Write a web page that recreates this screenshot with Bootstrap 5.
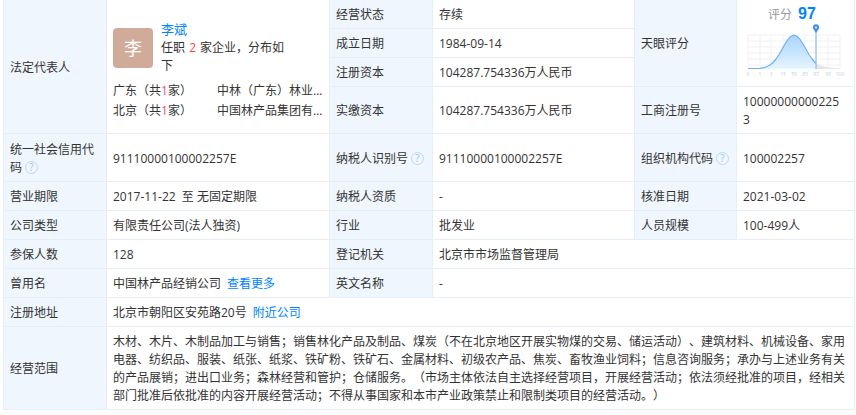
<!DOCTYPE html>
<html lang="zh">
<head>
<meta charset="utf-8">
<title>工商信息</title>
<link rel="stylesheet" href="https://cdn.jsdelivr.net/npm/bootstrap@5.3.0/dist/css/bootstrap.min.css">
<style>
html,body{background:#fff;overflow:hidden;height:415px}
body{font-family:"Open Sans","Noto Sans CJK SC",sans-serif;font-size:12px;color:#333;text-spacing-trim:space-all}
.sheet{margin:-1px 2px 0 3px}
.info-grid{table-layout:fixed;width:851px;border-collapse:collapse;font-size:12px;line-height:18px;--bs-table-border-color:#e6eef6;--bs-table-color:#333;color:#333}
.info-grid>tbody>tr>td{padding:5px 6px 3px;border:1px solid #e6eef6;vertical-align:middle;word-break:break-all}
.info-grid>tbody>tr>td.cap{--bs-table-bg:#eff6fd;background:#eff6fd}
.info-grid>tbody>tr>td.person-cell{padding:8px 6px 0}
.info-grid>tbody>tr>td.narrow-cell{padding-right:10px}
.info-grid>tbody>tr>td.score-cell{position:relative;padding:0;vertical-align:top}
.h29{height:29px}.h47{height:47px}.h48{height:48px}.h83{height:83px}
.blue{color:#0084ff;text-decoration:none}
.gap-link{margin-left:6px}
.face{width:40px;height:40px;flex:none;background:#d0ab9a;color:#fff;font-size:18px;border-radius:4px;line-height:40px;text-align:center}
.who{width:128px;margin-left:8px}
.who-name{font-size:13px;line-height:16px;margin-bottom:2px}
.num{color:#f44;margin:0 1px}.pink{color:#f5487a}
.areas{margin-top:6px}
.area{width:104px;flex:none;line-height:20px}
.firm{width:106px;line-height:20px}
.hint{display:inline-block;width:13px;height:13px;border:1px solid #bfd9ef;border-radius:50%;color:#9fc5e4;font-size:10px;line-height:11px;text-align:center;margin-left:3px;vertical-align:1px}
.cut-link{position:absolute;left:-19px;top:-14px;font-size:12px;line-height:18px;white-space:nowrap}
.score-head{line-height:20px;height:24px;padding-top:4px;text-align:center;padding-right:7px}
.score-label{color:#999;font-size:12px}
.score-val{color:#0084ff;font-weight:700;font-size:16px;margin-left:6px;font-family:"Liberation Sans",sans-serif}
.bell{display:block;width:116px;height:56px}
.bell text{font-size:5px;fill:#bcd0e6;text-anchor:middle}
</style>
</head>
<body>
<div class="sheet">
<table class="table table-bordered align-middle mb-0 info-grid">
<colgroup><col style="width:103px"><col style="width:223px"><col style="width:103px"><col style="width:202px"><col style="width:102px"><col style="width:118px"></colgroup>
<tbody>
<tr class="h29">
<td class="cap" rowspan="4">法定代表人</td>
<td rowspan="4" class="person-cell">
  <div class="d-flex align-items-center">
    <div class="face">李</div>
    <div class="who">
      <a class="blue who-name d-block" href="#">李斌</a>
      <div>任职 <span class="num">2</span> 家企业，分布如下</div>
    </div>
  </div>
  <div class="d-flex areas"><div class="area">广东（共<span class="pink">1</span>家）</div><div class="firm text-truncate">中林（广东）林业发展有限公司</div></div>
  <div class="d-flex"><div class="area">北京（共<span class="pink">1</span>家）</div><div class="firm text-truncate">中国林产品集团有限公司</div></div>
</td>
<td class="cap">经营状态</td><td>存续</td>
<td class="cap" rowspan="3">天眼评分</td>
<td rowspan="3" class="score-cell">
  <a class="blue cut-link" href="#">历史分</a>
  <div class="score-head"><span class="score-label">评分</span><span class="score-val">97</span></div>
  <svg class="bell" viewBox="0 4 116 56" role="img" aria-label="评分分布图">
    <defs><linearGradient id="fillg" x1="0" y1="0" x2="0" y2="1"><stop offset="0" stop-color="#a9d3fb"/><stop offset="1" stop-color="#e6f5fe"/></linearGradient></defs>
    <g stroke="#f1f1f3" stroke-width="1" fill="none">
      <path d="M11 15H103M11 21H103M11 27H103M11 33H103M11 39H103M11 45H103"/>
      <path d="M11 15V49M23 15V49M34 15V49M46 15V49M57 15V49M68 15V49M79 15V49M91 15V49M103 15V49"/>
    </g>
    <path d="M79 43.500C85 47 95 48 103 48.500V49H79Z" fill="#e6e6e8"/>
    <path d="M11 49V48.500L23 48.300 27 47.700 30 46.500 33 45 36 42.500 39 39 42 34.500 45 29.300 48 24 51 19.400 54 16.200 57 15 60 16.200 63 19.400 66 24 69 29.300 72 34.500 75 39 78 42.500 79 43.500V49Z" fill="url(#fillg)"/>
    <path d="M11 48.500L23 48.300 27 47.700 30 46.500 33 45 36 42.500 39 39 42 34.500 45 29.300 48 24 51 19.400 54 16.200 57 15 60 16.200 63 19.400 66 24 69 29.300 72 34.500 75 39 78 42.500 79 43.500" fill="none" stroke="#6fb0f7" stroke-width="1.200" stroke-linejoin="round"/>
    <path d="M79 11V49" stroke="#7aaef5" stroke-width="1"/>
    <path d="M79 13L76 8.500A3.200 3.200 0 1 1 82 8.500Z" fill="#4a90ee"/>
    <circle cx="79" cy="7.500" r="1.200" fill="#a9cdfa"/>
    <text x="11" y="56">0</text><text x="23" y="56">1</text><text x="34" y="56">3</text><text x="46" y="56">15</text><text x="57" y="56">50</text><text x="68" y="56">85</text><text x="79" y="56">97</text><text x="91" y="56">99</text><text x="103" y="56">100</text>
  </svg>
</td>
</tr>
<tr class="h29"><td class="cap">成立日期</td><td>1984-09-14</td></tr>
<tr class="h29"><td class="cap">注册资本</td><td>104287.754336万人民币</td></tr>
<tr class="h47"><td class="cap">实缴资本</td><td>104287.754336万人民币</td><td class="cap">工商注册号</td><td class="narrow-cell">100000000002253</td></tr>
<tr class="h48">
<td class="cap">统一社会信用代码<span class="hint">?</span></td><td>91110000100002257E</td>
<td class="cap">纳税人识别号<span class="hint">?</span></td><td>91110000100002257E</td>
<td class="cap">组织机构代码<span class="hint">?</span></td><td>100002257</td>
</tr>
<tr class="h29"><td class="cap">营业期限</td><td>2017-11-22&nbsp; 至 无固定期限</td><td class="cap">纳税人资质</td><td>-</td><td class="cap">核准日期</td><td>2021-03-02</td></tr>
<tr class="h29"><td class="cap">公司类型</td><td>有限责任公司(法人独资)</td><td class="cap">行业</td><td>批发业</td><td class="cap">人员规模</td><td>100-499人</td></tr>
<tr class="h29"><td class="cap">参保人数</td><td>128</td><td class="cap">登记机关</td><td colspan="3">北京市市场监督管理局</td></tr>
<tr class="h29"><td class="cap">曾用名</td><td>中国林产品经销公司<a class="blue gap-link" href="#">查看更多</a></td><td class="cap">英文名称</td><td colspan="3">-</td></tr>
<tr class="h29"><td class="cap">注册地址</td><td colspan="5">北京市朝阳区安苑路20号<a class="blue gap-link" href="#">附近公司</a></td></tr>
<tr class="h83"><td class="cap">经营范围</td><td colspan="5">木材、木片、木制品加工与销售；销售林化产品及制品、煤炭（不在北京地区开展实物煤的交易、储运活动）、建筑材料、机械设备、家用电器、纺织品、服装、纸张、纸浆、铁矿粉、铁矿石、金属材料、初级农产品、焦炭、畜牧渔业饲料；信息咨询服务；承办与上述业务有关的产品展销；进出口业务；森林经营和管护；仓储服务。（市场主体依法自主选择经营项目，开展经营活动；依法须经批准的项目，经相关部门批准后依批准的内容开展经营活动；不得从事国家和本市产业政策禁止和限制类项目的经营活动。）</td></tr>
</tbody>
</table>
</div>
<script src="https://cdn.jsdelivr.net/npm/bootstrap@5.3.0/dist/js/bootstrap.bundle.min.js"></script>
</body>
</html>
